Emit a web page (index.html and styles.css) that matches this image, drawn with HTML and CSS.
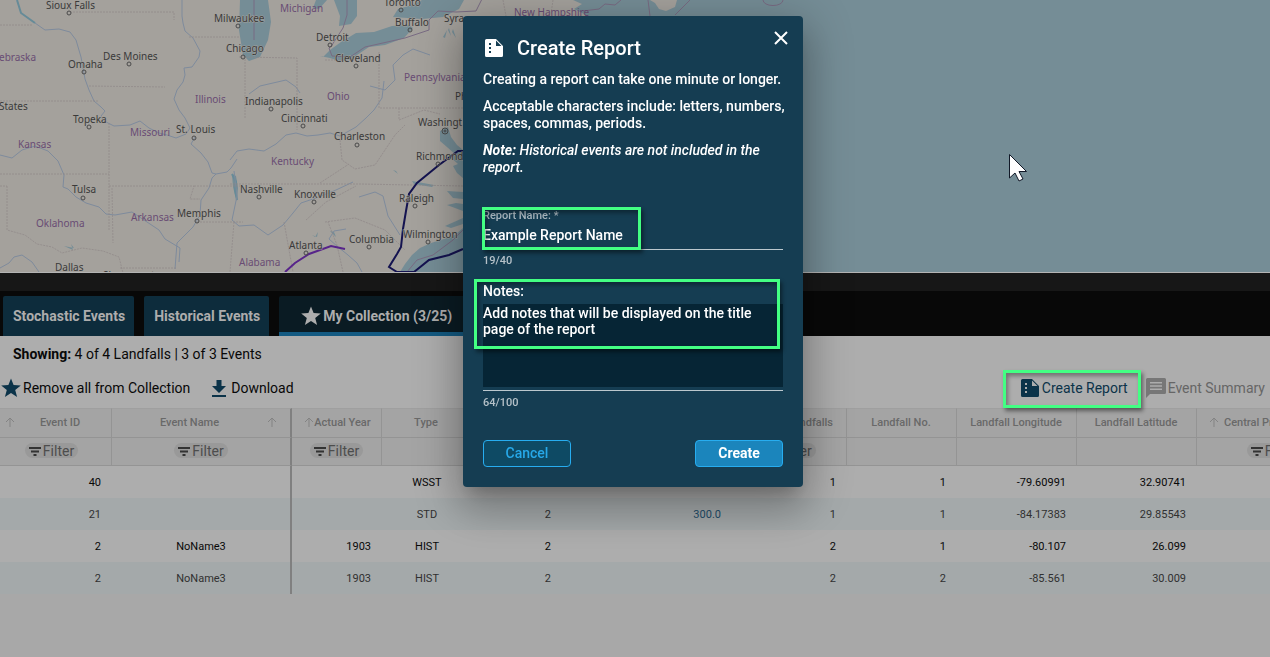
FILE: index.html
```html
<!DOCTYPE html>
<html lang="en">
<head>
<meta charset="utf-8">
<meta name="viewport" content="width=device-width, initial-scale=1">
<title>My Collection - Create Report</title>
<link rel="stylesheet" href="styles.css">
</head>
<body>
<svg class="sprite" aria-hidden="true">
  <symbol id="star" viewBox="0 0 20 20"><path d="M10 .5l2.600 6.600 7.200.4-5.600 4.500 1.900 7L10 15.100 3.900 19l1.900-7L.2 7.500l7.200-.4z"/></symbol>
  <symbol id="arrow" viewBox="0 0 10 10"><path d="M5 10V1M1 5l4-4 4 4" fill="none" stroke="currentColor"/></symbol>
  <symbol id="filter" viewBox="0 0 12 10"><path d="M0 1h12v2H0zM2 4.500h8v2H2zM4.500 8h3v2h-3z"/></symbol>
  <symbol id="report" viewBox="0 0 18 18"><path fill-rule="evenodd" d="M1.500 0H11l7 7v9.500a1.500 1.500 0 0 1-1.500 1.500h-15A1.500 1.500 0 0 1 0 16.500v-15A1.500 1.500 0 0 1 1.500 0zM11 1.500V7h5.500zM4 4v2h2V4zM4 8v2h2V8zM4 12v2h2v-2z"/></symbol>
  <symbol id="download" viewBox="0 0 14 17"><path d="M4.500 0h5v6H14l-7 7-7-7h4.500zM0 15h14v2H0z"/></symbol>
  <symbol id="message" viewBox="0 0 20 20"><path fill-rule="evenodd" d="M1.500 0h17A1.500 1.500 0 0 1 20 1.500v13a1.500 1.500 0 0 1-1.500 1.500H4l-4 4V1.500A1.500 1.500 0 0 1 1.500 0zM4 4v1.500h12V4zM4 7.200v1.500h12V7.200zM4 10.500V12h12v-1.500z"/></symbol>
</svg>

<main class="app">
  <section class="map" aria-label="Map">
    <svg class="map-canvas" viewBox="0 0 1270 272" preserveAspectRatio="xMidYMid slice">
      <rect class="water" width="1270" height="272"/>
      <path class="land" d="M0 0H573L582 4 574 9 588 16 600 30 560 60 480 120 470 225 463 228 455 235 444 239 431 243 420 248 412 255 405 264 400 272H0zM650 0l5 3 4 6 7 2 9-4 2-7z"/>
      <g class="water">
        <path d="M240 0l-1 30 4 25 6 6 11-4 8-17 3-18-3-22zM316 0l-3 8 6 1 8-9zM334 0l6 16-1 10 12-2 6-8V0zM323 57l7-7 11-8 15-9 18-1 18-6 17-1 4 3-9 10-19 7-16 2-12 8-6 5-12 1-9-3-10-2zM393 17l5-8 14-4 10-5h42l-5 9-16 8-21 2z"/>
        <path d="M440 131l8-4 3 10 6 8 6 5v28l-6-5-4-7 5-2-9-8 7-1-9-8-7-6zM447 191l16 1v7l-10-1zM447 205l9-2 7 1v7zM445 226l18-8v6l-12 4z"/>
        <path d="M232 174l4 2 2 12-1 13-2-6-2-8zM64 246l10 2-3-4 2 6zM393 170l5 4-2-3zM412 181l22 4-2 2-18-3zM312 235l5 2 1-5-3 5zM330 231l6 6-2-5zM443 37l4-7-2 8zM449 28l2 8-3-6zM453 29l3 9-4-6z"/>
      </g>
      <g class="lake-shore"><path d="M17 0l4 13 14 10M232 174l4 8-1 8 2 10"/></g>
      <g class="river">
        <path d="M35 23l10 7 14-1 11 3 6 8 5 17 4 22 4 11 5 11 7 6 4 4-4 5 2 4 5 3 6 3 16-1 10-4 9 7 10 5 8 2 9 3 10-4 4-6-5-10-6-8-5-11 3-9 6-8 2-7-1-7 8-1 7-10 1-6-7-13-8-7-2-8-1-7V0"/>
        <path d="M0 155l12 3 10-8 13-4 13 5 10 10 6 14-1 12 5 2 8 8 10 6 13 4 7 7 9 1 17-3 15 10 12 8 6 9 10 6 5 3-1 14M195 137l-4 7 10 9 7 9 4 11 4 1 11-2 4-4 6-9M216 174l-4 4-3 10-8 12-1 15-7 12-8 8-8 8-2 26M0 268l9-5 5-6 8-2 10 7 7 10"/>
        <path d="M249 94l11-8 26-6 10 7 4 6M230 160l7-9 12-2 15 2 12-7 10-9 10-2 11 3 11-1 12-2 10 3 16-9 10-9 8-8 8-12 2-17M234 171l3 25-5 24 7 6 15-1 14 10 15-10 10-12 8-10 15-5 20-8 17-8M346 229l-12 2-5 8 9 8 10 8 9 8 5 9M359 197l16-5 8 4 5 20 12 19M370 86l15 4 10-10-2-15 10-10 10-6 17 6"/>
      </g>
      <g class="border">
        <path d="M0 25h33M70 12h104v8M189 37h50M89 86l76 1M0 101h99M109 123v107M0 174h109M7 186v44l18 5 12 9 15 3 10 6 20-5 21 3 16 6 4 16M0 186h7M109 186h85l-4 13h10M194 186h46M197 222h46M112 188l1 55M120 268h56M234 222l-4 50M245 59v60M239 57l58 1v72M325 60h35M379 52v56h84M399 108v12l25-10 16 4M230 184h130l103 2M340 140l2 20 13 9 20-4 20-30 10-10M320 183l29-19M306 220l20-18 30-16M284 222l9 50M325 222l30-4 30 12 20 20"/>
        <path d="M343 272l-6-27-9-23M503 0l3 16M553 0l-2 14"/>
      </g>
      <g class="frontier">
        <path d="M254 0v40M347 0v15l-4 13-11 17-3 3 3 8 18 1 15-10 40-9 24-8v-10l9-9 18 1 20-1 7-14"/>
        <path d="M583 11l16-2 6-5 10 1 6-5M648 0l2 16M690 0l-15 15M763 0a9 5 0 0 0 20 0M463 230l-10 10-20 15-16 5-10 12"/>
      </g>
      <path class="track-purple" d="M285 272l10-9 14-9 22-8 14 3"/>
      <path class="track-navy" d="M470 151h-12l-19 14-22 18-8 11-3 17-3 18-2 18-4 7-8 13 8 5h17l15-12 20-5 14-6"/>
      <g class="state">
        <text x="280" y="12">Michigan</text><text x="-1" y="61">ebraska</text><text x="195" y="103">Illinois</text><text x="130" y="136">Missouri</text><text x="18" y="148">Kansas</text><text x="36" y="227">Oklahoma</text><text x="131" y="221">Arkansas</text><text x="327" y="100">Ohio</text><text x="404" y="81">Pennsylvania</text><text x="271" y="165">Kentucky</text><text x="239" y="266">Alabama</text><text x="514" y="16">New Hampshire</text>
      </g>
      <g class="city">
        <text x="46" y="9">Sioux Falls</text><text x="214" y="22">Milwaukee</text><text x="226" y="52">Chicago</text><text x="103" y="60">Des Moines</text><text x="68" y="68">Omaha</text><text x="73" y="123">Topeka</text><text x="176" y="133">St. Louis</text><text x="72" y="193">Tulsa</text><text x="177" y="217">Memphis</text><text x="55" y="271">Dallas</text><text x="103" y="279">Shreveport</text><text x="384" y="6">Toronto</text><text x="395" y="26">Buffalo</text><text x="444" y="22">Syra</text><text x="316" y="41">Detroit</text><text x="335" y="62">Cleveland</text><text x="245" y="105">Indianapolis</text><text x="281" y="122">Cincinnati</text><text x="334" y="140">Charleston</text><text x="418" y="126">Washingt</text><text x="416" y="160">Richmond</text><text x="240" y="193">Nashville</text><text x="294" y="198">Knoxville</text><text x="399" y="202">Raleigh</text><text x="403" y="238">Wilmington</text><text x="349" y="243">Columbia</text><text x="289" y="249">Atlanta</text><text x="455" y="100">Ph</text><text x="-1" y="110">States</text>
      </g>
      <g class="dot">
        <circle cx="69" cy="13" r="2"/><circle cx="238" cy="26" r="2"/><circle cx="243" cy="57" r="2"/><circle cx="129" cy="64" r="2"/><circle cx="84" cy="72" r="2"/><circle cx="89" cy="127" r="2"/><circle cx="194" cy="138" r="2"/><circle cx="83" cy="198" r="2"/><circle cx="197" cy="221" r="2"/><circle cx="401" cy="10" r="2"/><circle cx="410" cy="30" r="2"/><circle cx="330" cy="45" r="2"/><circle cx="356" cy="66" r="2"/><circle cx="271" cy="109" r="2"/><circle cx="303" cy="126" r="2"/><circle cx="357" cy="145" r="2"/><circle cx="438" cy="164" r="2"/><circle cx="259" cy="197" r="2"/><circle cx="314" cy="202" r="2"/><circle cx="415" cy="206" r="2"/><circle cx="428" cy="242" r="2"/><circle cx="369" cy="247" r="2"/><circle cx="306" cy="253" r="2"/><circle cx="445" cy="131" r="3"/><circle cx="445" cy="131" r="1"/>
      </g>
      <path class="pointer" d="M1009.500 154.500v23.500l5.500-5 4 8 4-2-4-7.500h7.500z"/>
    </svg>
  </section>

  <div class="splitter"></div>
  <nav class="tabs" aria-label="Event sets">
    <button class="tab">Stochastic Events</button>
    <button class="tab">Historical Events</button>
    <button class="tab tab-active"><svg class="icon-20"><use href="#star"/></svg>My Collection (3/25)</button>
  </nav>

  <section class="panel">
    <p class="showing"><b>Showing:</b> 4 of 4 Landfalls | 3 of 3 Events</p>
    <div class="toolbar">
      <button class="tool"><svg class="icon-20 navy"><use href="#star"/></svg>Remove all from Collection</button>
      <button class="tool tool-download"><svg class="icon-download navy"><use href="#download"/></svg>Download</button>
      <button class="tool tool-report"><svg class="icon-18"><use href="#report"/></svg>Create Report<span class="highlight highlight-report"></span></button>
      <button class="tool tool-muted"><svg class="icon-20"><use href="#message"/></svg>Event Summary</button>
    </div>

    <div class="grid-scroll">
      <table class="grid">
        <colgroup><col class="w112"><col class="w180"><col class="w90"><col class="w90"><col class="w90"><col class="w170"><col class="w115"><col class="w110"><col class="w120"><col class="w120"><col class="w154"></colgroup>
        <thead>
          <tr>
            <th scope="col"><div class="head"><svg class="icon-10"><use href="#arrow"/></svg><span>Event ID</span></div></th>
            <th scope="col" class="pinned"><div class="head head-end"><span>Event Name</span><svg class="icon-10"><use href="#arrow"/></svg></div></th>
            <th scope="col"><div class="head head-year"><svg class="icon-10"><use href="#arrow"/></svg><span>Actual Year</span></div></th>
            <th scope="col"><div class="head"><span>Type</span></div></th>
            <th scope="col"><div class="head"></div></th>
            <th scope="col"><div class="head"></div></th>
            <th scope="col"><div class="head head-falls"><span>Landfalls</span></div></th>
            <th scope="col"><div class="head"><span>Landfall No.</span></div></th>
            <th scope="col"><div class="head"><span>Landfall Longitude</span></div></th>
            <th scope="col"><div class="head"><span>Landfall Latitude</span></div></th>
            <th scope="col"><div class="head head-start"><svg class="icon-10"><use href="#arrow"/></svg><span>Central Pressure</span></div></th>
          </tr>
          <tr>
            <td class="first"><button class="pill"><svg class="icon-filter"><use href="#filter"/></svg>Filter</button></td>
            <td class="pinned"><button class="pill"><svg class="icon-filter"><use href="#filter"/></svg>Filter</button></td>
            <td><button class="pill"><svg class="icon-filter"><use href="#filter"/></svg>Filter</button></td>
            <td></td><td></td><td></td>
            <td><button class="pill"><svg class="icon-filter"><use href="#filter"/></svg>Filter</button></td>
            <td></td><td></td><td></td>
            <td><button class="pill"><svg class="icon-filter"><use href="#filter"/></svg>Filter</button></td>
          </tr>
        </thead>
        <tbody>
          <tr><td>40</td><td class="mid pinned"></td><td></td><td class="mid">WSST</td><td></td><td></td><td>1</td><td>1</td><td>-79.60991</td><td>32.90741</td><td></td></tr>
          <tr><td>21</td><td class="mid pinned"></td><td></td><td class="mid">STD</td><td>2</td><td class="link">300.0</td><td>1</td><td>1</td><td>-84.17383</td><td>29.85543</td><td></td></tr>
          <tr><td>2</td><td class="mid pinned">NoName3</td><td>1903</td><td class="mid">HIST</td><td>2</td><td></td><td>2</td><td>1</td><td>-80.107</td><td>26.099</td><td></td></tr>
          <tr><td>2</td><td class="mid pinned">NoName3</td><td>1903</td><td class="mid">HIST</td><td>2</td><td></td><td>2</td><td>2</td><td>-85.561</td><td>30.009</td><td></td></tr>
        </tbody>
      </table>
    </div>
  </section>
</main>

<div class="overlay">
  <form class="dialog" role="dialog" aria-labelledby="dialog-title">
    <header class="dialog-head">
      <svg class="icon-18"><use href="#report"/></svg>
      <h1 id="dialog-title">Create Report</h1>
      <button type="button" class="close" aria-label="Close"><svg viewBox="0 0 14 14"><path d="M1 1l12 12M13 1L1 13"/></svg></button>
    </header>
    <div class="copy">
      <p>Creating a report can take one minute or longer.</p>
      <p>Acceptable characters include: letters, numbers, spaces, commas, periods.</p>
      <p><em><b>Note:</b> Historical events are not included in the report.</em></p>
    </div>
    <div class="field">
      <label class="label-small" for="report-name">Report Name: *</label>
      <input id="report-name" class="name-input" type="text" value="Example Report Name">
      <span class="count">19/40</span>
      <span class="highlight highlight-name"></span>
    </div>
    <div class="field field-notes">
      <label class="label-notes" for="notes">Notes:</label>
      <div class="notes-line"><textarea id="notes" class="notes">Add notes that will be displayed on the title page of the report</textarea></div>
      <span class="count">64/100</span>
      <span class="highlight highlight-notes"></span>
    </div>
    <footer class="actions">
      <button type="button" class="btn">Cancel</button>
      <button type="button" class="btn btn-primary">Create</button>
    </footer>
  </form>
</div>
</body>
</html>
```

FILE: styles.css
```css
* { box-sizing: border-box; }
html, body { height: 100%; }
body { margin: 0; overflow: hidden; background: #a8a8a8; color: #080808; font-family: Roboto, Arial, sans-serif; font-size: 14px; }
button, input, textarea { font: inherit; color: inherit; }
button { border: 0; padding: 0; background: none; cursor: pointer; }
p, h1 { margin: 0; }
svg { display: block; flex: none; fill: currentColor; }
.sprite { position: absolute; width: 0; height: 0; }
.icon-10 { width: 10px; height: 10px; }
.icon-18 { width: 18px; height: 18px; }
.icon-20 { width: 20px; height: 20px; }
.icon-download { width: 14px; height: 17px; }
.icon-filter { width: 12px; height: 10px; }
.navy { color: #0b3349; }

/* Map */
.map { border-bottom: 1px solid #b4b4b4; }
.map-canvas { width: 100%; height: 272px; font-family: "Noto Sans", sans-serif; font-size: 10px; }
.water { fill: #758d96; }
.land { fill: #a4a19c; }
.river, .border, .frontier, .lake-shore { fill: none; }
.river { stroke: #7e8b9c; }
.lake-shore { stroke: #668b98; stroke-width: 2; }
.border { stroke: #8f8788; stroke-dasharray: 2 1; opacity: .7; }
.frontier { stroke: #796b83; }
.track-purple { fill: none; stroke: #57248a; stroke-width: 2; }
.track-navy { fill: none; stroke: #141350; stroke-width: 2; }
.state { fill: #694c74; }
.city { fill: #3a3a3a; paint-order: stroke; stroke: #a4a19c; stroke-width: 1px; }
.dot { fill: none; stroke: #4a4a4a; }
.pointer { fill: #fff; stroke: #111827; }

/* Tabs */
.splitter { height: 18px; background: #171717; }
.tabs { display: flex; gap: 10px; height: 45px; padding: 5px 3px 0; background: #080808; }
.tab { display: flex; align-items: center; padding: 0 9px 0 10px; border-radius: 2px 2px 0 0; background: #0d2c3c; color: #adadad; font-weight: 700; white-space: nowrap; }
.tab-active { padding: 4px 22px 0; border-bottom: 4px solid #135a82; background: #0a1b23; gap: 2px; }

/* Toolbar */
.showing { padding: 10px 13px 0; line-height: 17px; }
.panel { background: #adadad; }
.toolbar { display: flex; align-items: center; height: 45px; padding: 5px 5px 0 1px; }
.tool { display: flex; align-items: center; gap: 2px; position: relative; white-space: nowrap; }
.tool-download { margin-left: 22px; gap: 5px; }
.tool-report { margin-left: auto; gap: 3px; color: #0b3349; }
.tool-muted { margin-left: 18px; color: #666; }
.tool-muted svg { color: #777; }

/* Grid */
.grid-scroll { overflow: hidden; }
.grid { width: 1351px; table-layout: fixed; border-collapse: separate; border-spacing: 0; font-size: 11px; }
.w112 { width: 112px; } .w180 { width: 180px; } .w90 { width: 90px; } .w170 { width: 170px; } .w115 { width: 115px; }
.w110 { width: 110px; } .w120 { width: 120px; } .w154 { width: 154px; }
.grid th, .grid td { padding: 0; }
.grid thead th, .grid thead td { height: 28px; padding-bottom: 2px; border-right: 1px solid #949494; border-bottom: 1px solid #949494; background: #a4a4a4; text-align: center; }
.grid thead th { height: 30px; border-top: 1px solid #9f9f9f; color: #696969; font-weight: 500; }
.grid .pinned { border-right: 2px solid #808080; }
.grid thead .first { padding-right: 8px; }
.head { display: flex; align-items: center; padding: 0 6px 0 5px; white-space: nowrap; }
.head span { flex: 1; }
.head svg { color: #838383; }
.head-end { padding: 0 13px 0 0; }
.head-year { padding: 0 10px 0 12px; }
.head-start { gap: 5px; padding-left: 12px; text-align: left; }
.head-falls { padding: 0 13px; text-align: right; }
.pill { display: inline-flex; align-items: center; gap: 2px; height: 15px; padding: 0 4px; border-radius: 8px; background: #999; color: #4d4d4d; font-size: 14px; vertical-align: middle; }
.pill svg { color: #333; }
.grid tbody td { height: 32px; padding-right: 11px; text-align: right; }
.grid tbody .mid { padding: 0; text-align: center; }
.grid tbody tr:nth-child(even) { background: #a4a9aa; color: #303030; }
.grid tbody .link { color: #1d4c68; }

/* Dialog */
.overlay { position: fixed; inset: 0; display: flex; align-items: flex-start; justify-content: center; padding: 16px 4px 0 0; }
.dialog { width: 340px; padding: 20px; border-radius: 4px; background: #153d52; color: #fff; font-weight: 500; box-shadow: 0 11px 15px -7px rgba(0,0,0,.2), 0 24px 38px 3px rgba(0,0,0,.14), 0 9px 46px 8px rgba(0,0,0,.2); }
.dialog-head { display: flex; align-items: center; gap: 14px; height: 24px; padding-left: 2px; }
.dialog-head h1 { font-size: 20px; font-weight: 500; line-height: 24px; }
.close { align-self: flex-start; margin: -5px -5px 0 auto; }
.close svg { width: 14px; height: 14px; stroke: #fff; stroke-width: 2; }
.copy { display: grid; gap: 10px; margin: 11px -10px 0 0; line-height: 17px; }
.field { position: relative; display: flex; flex-direction: column; align-items: stretch; margin-top: 33px; }
.label-small { color: #a9b7bf; font-size: 11px; line-height: 13px; }
.name-input { width: 100%; height: 28px; padding: 0 0 2px; border: 0; border-bottom: 1px solid #bcc8ce; background: none; outline: 0; }
.count { margin-top: 4px; color: #b5c1c8; font-size: 11px; line-height: 13px; }
.field-notes { margin-top: 15px; }
.label-notes { line-height: 18px; }
.notes-line { display: flex; margin-top: 4px; padding-bottom: 3px; border-bottom: 1px solid #bcc8ce; }
.notes { width: 100%; height: 83px; padding: 1px 0; border: 0; background: #062535; line-height: 16px; resize: none; outline: 0; }
.field-notes .count { margin-top: 5px; }
.actions { display: flex; justify-content: space-between; margin-top: 31px; }
.btn { width: 88px; height: 27px; padding-bottom: 2px; border: 1px solid #27adf0; border-radius: 4px; background: #0e4a64; color: #27a8e8; font-weight: 500; }
.btn-primary { background: #1b85bc; color: #fff; font-weight: 700; }

/* Call-out frames */
.highlight { position: absolute; border: 3px solid #43ff83; box-shadow: 2px 3px 4px rgba(0,0,0,.45), inset 2px 3px 4px rgba(0,0,0,.35); pointer-events: none; }
.highlight-report { inset: -9px -13px -11px -18px; }
.highlight-name { top: -2px; left: -1px; width: 159px; height: 43px; }
.highlight-notes { top: -3px; left: -9px; right: 3px; height: 70px; }
```
